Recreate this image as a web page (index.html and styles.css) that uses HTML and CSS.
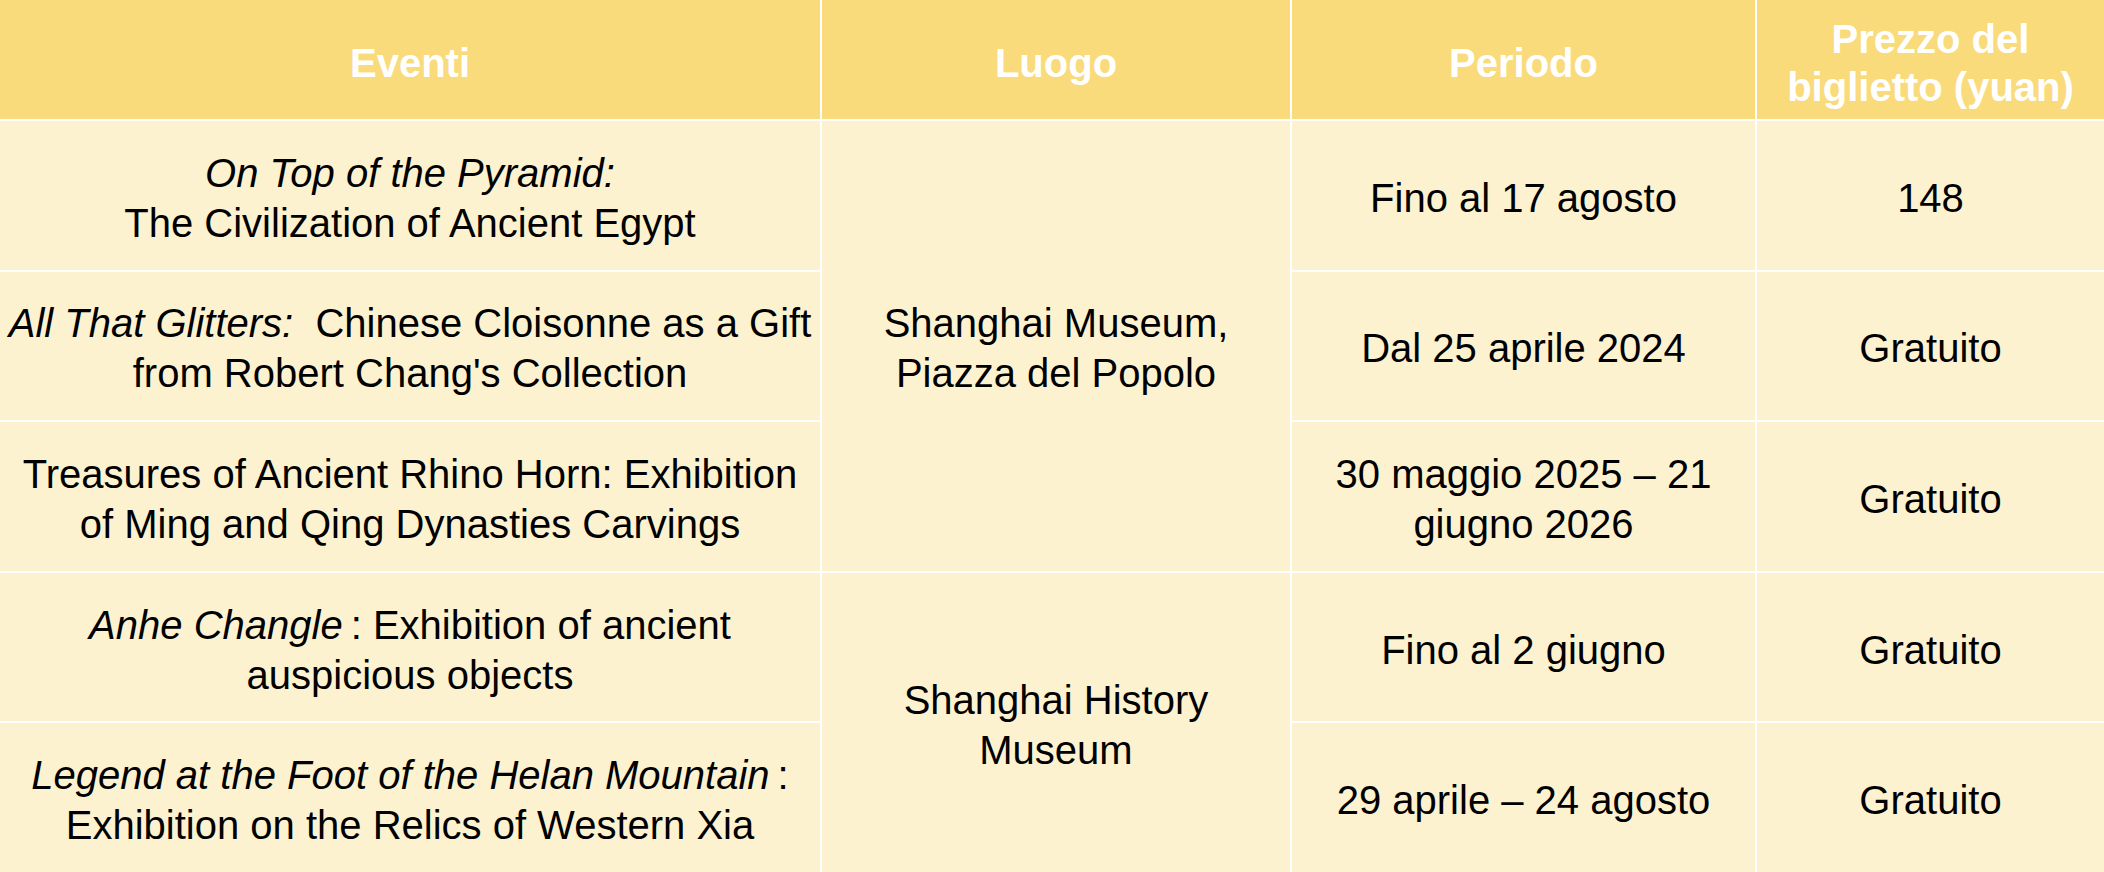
FILE: index.html
```html
<!DOCTYPE html>
<html lang="it">
<head>
<meta charset="utf-8">
<title>Eventi</title>
<link rel="stylesheet" href="styles.css">
</head>
<body>
<div class="table">
  <div class="cell head">Eventi</div>
  <div class="cell head">Luogo</div>
  <div class="cell head">Periodo</div>
  <div class="cell head">Prezzo del biglietto (yuan)</div>

  <div class="cell ev"><span><em>On Top of the Pyramid:</em><br>The Civilization of Ancient Egypt</span></div>
  <div class="cell place place-a">Shanghai Museum,<br>Piazza del Popolo</div>
  <div class="cell">Fino al 17 agosto</div>
  <div class="cell">148</div>

  <div class="cell ev"><span><em>All That Glitters:</em>&nbsp; Chinese Cloisonne as a Gift<br>from Robert Chang's Collection</span></div>
  <div class="cell">Dal 25 aprile 2024</div>
  <div class="cell">Gratuito</div>

  <div class="cell ev"><span>Treasures of Ancient Rhino Horn: Exhibition<br>of Ming and Qing Dynasties Carvings</span></div>
  <div class="cell">30 maggio 2025 – 21<br>giugno 2026</div>
  <div class="cell">Gratuito</div>

  <div class="cell ev"><span><em>Anhe Changle</em>&thinsp;: Exhibition of ancient<br>auspicious objects</span></div>
  <div class="cell place place-b">Shanghai History<br>Museum</div>
  <div class="cell">Fino al 2 giugno</div>
  <div class="cell">Gratuito</div>

  <div class="cell ev"><span><em>Legend at the Foot of the Helan Mountain</em>&thinsp;:<br>Exhibition on the Relics of Western Xia</span></div>
  <div class="cell">29 aprile – 24 agosto</div>
  <div class="cell">Gratuito</div>
</div>
</body>
</html>
```
FILE: styles.css
```css
html, body {
  margin: 0;
  padding: 0;
  background: #ffffff;
}
body {
  font-family: "Liberation Sans", Arial, sans-serif;
  color: #000000;
}
.table {
  display: grid;
  grid-template-columns: 820px 468px 463px 1fr;
  grid-template-rows: 119px repeat(5, 1fr);
  gap: 2px;
  width: 2104px;
  height: 872px;
  background: #ffffff;
}
.cell {
  display: flex;
  align-items: center;
  justify-content: center;
  text-align: center;
  background: #fdf2d0;
  font-size: 40px;
  line-height: 50px;
  padding: 5px 4px 0;
  white-space: nowrap;
}
.cell em {
  font-style: italic;
}
.head {
  background: #f9db7b;
  color: #ffffff;
  font-weight: bold;
  line-height: 48px;
  white-space: normal;
  padding: 7px 24px 0;
}
.place-a {
  grid-column: 2;
  grid-row: 2 / span 3;
}
.place-b {
  grid-column: 2;
  grid-row: 5 / span 2;
}
```
